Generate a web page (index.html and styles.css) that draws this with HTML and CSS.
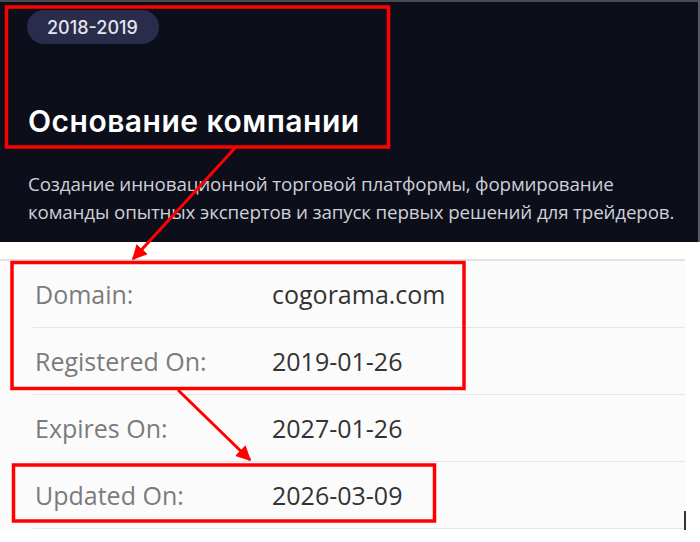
FILE: index.html
```html
<!DOCTYPE html>
<html lang="ru">
<head>
<meta charset="utf-8">
<title>Основание компании</title>
<link rel="stylesheet" href="styles.css">
</head>
<body>
<div class="page">
  <section class="hero">
    <span class="pill">2018-2019</span>
    <h1 class="title">Основание компании</h1>
    <p class="desc">Создание инновационной торговой платформы, формирование команды опытных экспертов и запуск первых решений для трейдеров.</p>
  </section>

  <section class="whois">
    <div class="row"><span class="label">Domain:</span><span class="value">cogorama.com</span></div>
    <div class="row"><span class="label">Registered On:</span><span class="value">2019-01-26</span></div>
    <div class="row"><span class="label">Expires On:</span><span class="value">2027-01-26</span></div>
    <div class="row"><span class="label">Updated On:</span><span class="value">2026-03-09</span></div>
  </section>

  <span class="caret"></span>

  <svg class="annot" width="700" height="542" viewBox="0 0 700 542" aria-hidden="true">
    <defs>
      <marker id="ah" viewBox="0 0 10 10" refX="9" refY="5" markerWidth="5" markerHeight="5" orient="auto" markerUnits="strokeWidth">
        <path d="M0 0 L10 5 L0 10 z" fill="#ff0000"/>
      </marker>
    </defs>
    <g fill="none" stroke="#ff0000" stroke-width="3.5">
      <rect x="6.5" y="7" width="382" height="140"/>
      <rect x="12" y="262.5" width="452" height="126"/>
      <rect x="13.5" y="465" width="421" height="56"/>
      <line x1="235" y1="148" x2="133" y2="259" stroke-width="3" marker-end="url(#ah)"/>
      <line x1="178" y1="390" x2="250" y2="460" stroke-width="3" marker-end="url(#ah)"/>
    </g>
  </svg>
</div>
</body>
</html>
```
FILE: styles.css
```css
* { box-sizing: border-box; }
html, body { margin: 0; padding: 0; background: #ffffff; }
.page {
  position: relative;
  width: 700px;
  height: 542px;
  overflow: hidden;
}
.hero {
  width: 700px;
  height: 242px;
  background: #0c0e1a;
  border-top: 2px solid #4a4b52;
  border-right: 2px solid #5a5b62;
  padding: 8px 0 0 27px;
  display: flex;
  flex-direction: column;
  align-items: flex-start;
  overflow: hidden;
}
.hero > * { flex-shrink: 0; }
.pill {
  display: inline-flex;
  align-items: center;
  height: 34px;
  padding: 0 21px 0 20px;
  border-radius: 17px;
  background: #292d4b;
  color: #e4e5ee;
  font-family: Inter, "Noto Sans", sans-serif;
  font-size: 18px;
  font-weight: 500;
}
.title {
  margin: 59px 0 0 1px;
  font-family: Inter, "Noto Sans", sans-serif;
  font-size: 30px;
  line-height: 36px;
  font-weight: 600;
  color: #ffffff;
  letter-spacing: 0.5px;
}
.desc {
  margin: 31px 0 0 1px;
  width: 655px;
  font-family: "Open Sans", "Noto Sans", sans-serif;
  font-size: 18.8px;
  line-height: 28px;
  letter-spacing: -0.15px;
  color: #cfd0d8;
}
.whois {
  margin-top: 17px;
  width: 685px;
  background: #fbfbfb;
  border-top: 2px solid #e2e2e2;
  padding-left: 33px;
}
.row {
  display: flex;
  align-items: center;
  height: 67px;
  border-bottom: 1px solid #e6e6e6;
  font-family: "Open Sans", "Noto Sans", sans-serif;
  font-size: 25px;
}
.label {
  width: 239px;
  padding-left: 2px;
  color: #7b7b7b;
}
.value {
  color: #333333;
}
.caret {
  position: absolute;
  left: 684px;
  top: 511px;
  width: 2px;
  height: 19px;
  background: #333;
}
.annot {
  position: absolute;
  left: 0;
  top: 0;
  pointer-events: none;
}
```
